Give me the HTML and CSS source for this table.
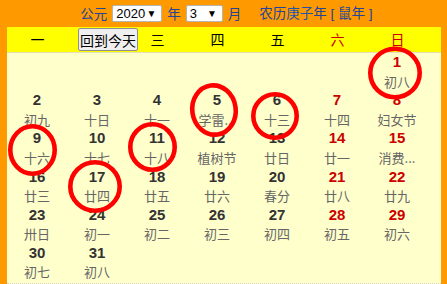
FILE: index.html
```html
<!DOCTYPE html>
<html lang="zh-CN">
<head>
<meta charset="utf-8">
<link rel="stylesheet" href="styles.css">
</head>
<body>
<div class="top">
  <span class="lbl">公元</span>
  <span class="sel sel-year"><span>2020</span><span class="arr">▼</span></span>
  <span class="lbl">年</span>
  <span class="sel sel-month"><span>3</span><span class="arr">▼</span></span>
  <span class="lbl">月</span>
  <span class="lunar-year">农历<span class="gz">庚子</span>年 [ 鼠年 ]</span>
</div>
<div class="cal">
  <div class="head">
    <span class="wd">一</span>
    <span class="wd"><button class="today">回到今天</button></span>
    <span class="wd">三</span>
    <span class="wd">四</span>
    <span class="wd">五</span>
    <span class="wd red">六</span>
    <span class="wd red">日</span>
  </div>
  <div class="days">
    <div class="cell"></div><div class="cell"></div><div class="cell"></div><div class="cell"></div><div class="cell"></div><div class="cell"></div>
    <div class="cell"><b class="n red">1</b><span class="l">初八</span></div>

    <div class="cell"><b class="n">2</b><span class="l">初九</span></div>
    <div class="cell"><b class="n">3</b><span class="l">十日</span></div>
    <div class="cell"><b class="n">4</b><span class="l">十一</span></div>
    <div class="cell"><b class="n">5</b><span class="l">学雷...</span></div>
    <div class="cell"><b class="n">6</b><span class="l">十三</span></div>
    <div class="cell"><b class="n red">7</b><span class="l">十四</span></div>
    <div class="cell"><b class="n red">8</b><span class="l">妇女节</span></div>

    <div class="cell"><b class="n">9</b><span class="l">十六</span></div>
    <div class="cell"><b class="n">10</b><span class="l">十七</span></div>
    <div class="cell"><b class="n">11</b><span class="l">十八</span></div>
    <div class="cell"><b class="n">12</b><span class="l">植树节</span></div>
    <div class="cell"><b class="n">13</b><span class="l">廿日</span></div>
    <div class="cell"><b class="n red">14</b><span class="l">廿一</span></div>
    <div class="cell"><b class="n red">15</b><span class="l">消费...</span></div>

    <div class="cell"><b class="n">16</b><span class="l">廿三</span></div>
    <div class="cell"><b class="n">17</b><span class="l">廿四</span></div>
    <div class="cell"><b class="n">18</b><span class="l">廿五</span></div>
    <div class="cell"><b class="n">19</b><span class="l">廿六</span></div>
    <div class="cell"><b class="n">20</b><span class="l">春分</span></div>
    <div class="cell"><b class="n red">21</b><span class="l">廿八</span></div>
    <div class="cell"><b class="n red">22</b><span class="l">廿九</span></div>

    <div class="cell"><b class="n">23</b><span class="l">卅日</span></div>
    <div class="cell"><b class="n">24</b><span class="l">初一</span></div>
    <div class="cell"><b class="n">25</b><span class="l">初二</span></div>
    <div class="cell"><b class="n">26</b><span class="l">初三</span></div>
    <div class="cell"><b class="n">27</b><span class="l">初四</span></div>
    <div class="cell"><b class="n red">28</b><span class="l">初五</span></div>
    <div class="cell"><b class="n red">29</b><span class="l">初六</span></div>

    <div class="cell"><b class="n">30</b><span class="l">初七</span></div>
    <div class="cell"><b class="n">31</b><span class="l">初八</span></div>
  </div>
</div>
<svg class="marks" width="447" height="284" viewBox="0 0 447 284">
  <g fill="none" stroke="#ff0000" stroke-width="4.6">
    <ellipse cx="395" cy="73" rx="24.7" ry="24.3"/>
    <ellipse cx="214" cy="110" rx="21.7" ry="24.7" transform="rotate(-8 214 110)"/>
    <ellipse cx="275" cy="116" rx="21.7" ry="21.7"/>
    <ellipse cx="32.5" cy="150" rx="22.2" ry="23.7"/>
    <ellipse cx="152.5" cy="147" rx="22.2" ry="22.7"/>
    <ellipse cx="95" cy="186.5" rx="24.7" ry="24.2"/>
  </g>
</svg>
</body>
</html>
```

FILE: styles.css
```css
html, body {
  margin: 0;
  padding: 0;
}
body {
  background: #ff9900;
  width: 447px;
  height: 284px;
  overflow: hidden;
  position: relative;
  font-family: "Liberation Sans", "Noto Sans CJK SC", sans-serif;
}
.top {
  height: 27px;
  display: flex;
  align-items: center;
  justify-content: center;
  padding-left: 1px;
  color: #224499;
  font-size: 13.5px;
  font-family: "Noto Sans CJK SC", sans-serif;
}
.lbl {
  margin: 0 5px;
  line-height: 17px;
}
.sel {
  display: inline-flex;
  align-items: center;
  justify-content: space-between;
  box-sizing: border-box;
  height: 17px;
  background: #fff;
  border: 1px solid #b5b5b5;
  border-radius: 2px;
  color: #000;
  font-family: "Liberation Sans", sans-serif;
  font-size: 13px;
  padding: 0 5px 0 3px;
}
.sel-year { width: 50px; }
.sel-month { width: 37px; }
.arr {
  font-size: 10px;
  color: #000;
}
.lunar-year {
  margin-left: 13px;
  line-height: 17px;
  font-family: "Liberation Sans", "Noto Sans CJK SC", sans-serif;
}
.gz { color: #2255aa; }
.cal {
  margin: 0 6px 0 7px;
}
.head {
  background: #ffff00;
  height: 25px;
  border-bottom: 1px solid #e4dfb8;
  display: grid;
  grid-template-columns: repeat(7, 60px);
  align-items: center;
  font-family: "Noto Sans CJK SC", sans-serif;
  font-size: 14px;
  color: #000;
}
.wd {
  text-align: center;
  line-height: 25px;
  padding-left: 1px;
}
.wd.red { color: #cc0000; }
.today {
  display: block;
  box-sizing: border-box;
  width: 60px;
  height: 23px;
  margin: 0 0 0 10px;
  padding: 0;
  background: #efefef;
  border: 1px solid #8f8f8f;
  border-radius: 2px;
  font-family: "Noto Sans CJK SC", sans-serif;
  font-size: 14px;
  color: #000;
  line-height: 20px;
}
.days {
  background: #ffffcc;
  height: 230px;
  border-bottom: 1px dotted #d6d3c4;
  display: grid;
  grid-template-columns: repeat(7, 60px);
  grid-auto-rows: 38.2px;
  align-content: start;
}
.cell {
  display: flex;
  flex-direction: column;
  align-items: center;
}
.n {
  font-family: "Liberation Sans", sans-serif;
  font-weight: bold;
  font-size: 15px;
  line-height: 18.5px;
  color: #333;
}
.n.red { color: #cc0000; }
.l {
  font-family: "Noto Sans CJK SC", sans-serif;
  font-size: 13px;
  line-height: 19.7px;
  color: #666;
  white-space: nowrap;
}
.marks {
  position: absolute;
  left: 0;
  top: 0;
  pointer-events: none;
}
```
